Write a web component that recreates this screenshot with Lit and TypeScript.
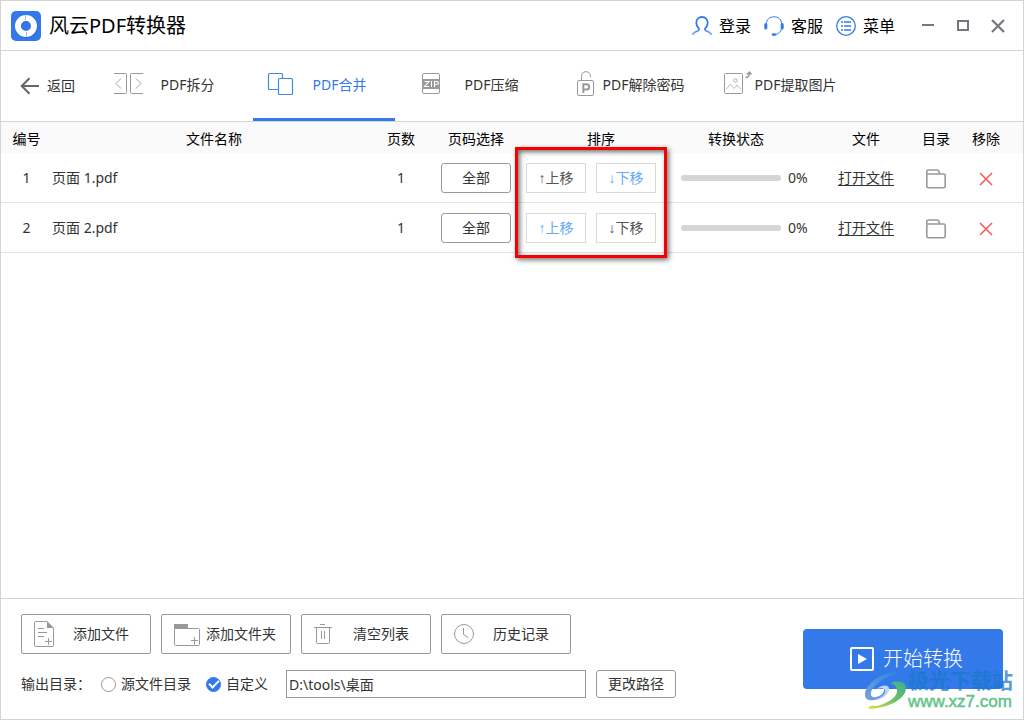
import { LitElement, html, css, svg } from "lit";
import { customElement, state } from "lit/decorators.js";
import { classMap } from "lit/directives/class-map.js";
import { styleMap } from "lit/directives/style-map.js";

interface Row {
  id: number;
  name: string;
  pages: number;
  progress: number;
}

const icons = {
  logo: html`<svg width="30" height="30" viewBox="0 0 30 30" aria-hidden="true">
    <rect width="30" height="30" rx="5" fill="#3379ea" />
    <circle cx="16" cy="16" r="8" fill="none" stroke="#2158b8" stroke-width="6" opacity=".45" />
    <circle cx="15" cy="15" r="8" fill="none" stroke="#fff" stroke-width="6" />
    <path d="M14.500 4v5M15.500 21v5" stroke="#9cbcf3" stroke-width="1" />
  </svg>`,
  user: html`<svg width="20" height="20" viewBox="0 0 20 20" fill="none" aria-hidden="true">
    <defs><linearGradient id="u" x1="0" y1="0" x2="0" y2="1"><stop offset=".6" stop-color="#3379ea" /><stop offset="1" stop-color="#8db6f5" /></linearGradient></defs>
    <path d="M.5 19c.6-2.700 3.200-3.200 5.500-4.200 1.300-.6 1.400-1.600.5-2.700C5.200 10.600 4.300 9 4.300 6.800 4.300 3.300 6.700 1 10 1s5.700 2.300 5.700 5.800c0 2.200-.9 3.800-2.200 5.300-.9 1.100-.8 2.100.5 2.700 2.300 1 4.900 1.500 5.500 4.200" stroke="url(#u)" stroke-width="1.800" />
  </svg>`,
  headset: html`<svg width="20" height="20" viewBox="0 0 20 20" fill="none" stroke="#3379ea" aria-hidden="true">
    <path d="M2.300 8C2.500 3.500 5.500.8 10 .8S17.500 3.500 17.700 8M17.400 13c-.8 3-2.700 4.900-5.600 5.400" stroke-width="1" />
    <rect x=".3" y="7" width="3" height="6.500" rx="1.500" fill="#3379ea" stroke="none" />
    <rect x="16.700" y="7" width="3" height="6.500" rx="1.500" fill="#3379ea" stroke="none" />
    <ellipse cx="10" cy="18.600" rx="2.400" ry="1.300" fill="#3379ea" stroke="none" />
  </svg>`,
  menu: html`<svg width="20" height="20" viewBox="0 0 20 20" fill="none" stroke="#3379ea" aria-hidden="true">
    <circle cx="10" cy="10" r="9.300" stroke-width="1.300" />
    <path d="M5 6h2M8 6h7M5 10h2M8 10h7M5 14h2M8 14h7" stroke-width="1.600" />
  </svg>`,
  back: html`<svg width="20" height="18" viewBox="0 0 20 18" fill="none" stroke="#666" stroke-width="2" aria-hidden="true">
    <path d="M19 9H2M9.500 1.200 1.700 9l7.800 7.800" />
  </svg>`,
  split: svg`<g stroke="#999"><path d="M0 3.500h11.500q1 0 1 1v18q0 1-1 1H0M29 3.500H17.500q-1 0-1 1v18q0 1 1 1H29" /><path d="M7 8.500 2 13.500l5 5M22 8.500l5 5-5 5" stroke-width=".9" /></g>`,
  merge: svg`<g stroke="#3f8ae8" stroke-width="1.200"><path d="M12 19.500H3.500q-1 0-1-1v-14q0-1 1-1h12q1 0 1 1V8" /><rect x="12.500" y="8.500" width="14" height="16" rx="1" /></g>`,
  zip: svg`<rect x="4.500" y="3.500" width="17" height="20" rx="1.500" stroke="#999" /><path d="M4 9h18v10H4z" fill="#999" /><path d="M6.500 11.500h4.500l-4.500 5H11M13.500 11v6M16.500 17v-5.500h2.500q1.500 0 1.500 1.400t-1.500 1.400h-2.500" stroke="#fff" stroke-width="1.100" />`,
  lock: svg`<rect x="7.500" y="10.500" width="16" height="15" rx="1.500" stroke="#999" /><path d="M11.500 10V6.500q0-4.800 4.500-4.800 4.500 0 4.500 4.800V7.500" stroke="#999" /><path d="M13.300 23V14.200h3q2.900 0 2.900 2.700t-2.900 2.700h-2.500" stroke="#999" stroke-width="2" />`,
  image: svg`<rect x="2.500" y="3.500" width="18" height="20" rx="1" stroke="#999" /><circle cx="13.500" cy="10.500" r="1.700" stroke="#aaa" /><path d="M4.500 19 8.500 14l3.500 4.500 3-3.500 4 4.500" stroke="#bbb" /><path d="M23.500 7.500q4 0 4-5M24.700 4.500l2.800-2.500 2 2.500" stroke="#999" stroke-width="1.500" />`,
  folder: html`<svg width="20" height="20" viewBox="0 0 20 20" fill="none" stroke="#999" stroke-width="1.600" aria-hidden="true">
    <path d="M.8 5V2.300Q.8 1 2 1h9q1.500 0 2 1.500l.6 2.200" /><rect x=".8" y="5" width="18.400" height="13.800" rx="1.500" />
  </svg>`,
  remove: html`<svg width="14" height="14" viewBox="0 0 14 14" stroke="#f4585d" stroke-width="1.500" aria-hidden="true">
    <path d="m1 1 12 12M13 1 1 13" />
  </svg>`,
  addFile: svg`<path d="M13 2.500H1.500q-1 0-1 1v23q0 1 1 1h17q1 0 1-1V9" stroke="#999" /><path d="M13 2v7h7z" fill="#999" /><path d="M4 9.500h6M4 13.500h9M4 17.500h6M14.500 19v7M11 22.500h7" stroke="#999" />`,
  addFolder: svg`<path d="M0 9.500V5h14v4.500z" fill="#999" /><path d="M.5 9.500h24q1 0 1 1v15q0 1-1 1h-23q-1 0-1-1zM20.500 18v7.500M17 21.500h7" stroke="#999" />`,
  trash: svg`<path d="M6 5.500h5M0 8.500h18M2.500 8.500v15q0 1 1 1h11q1 0 1-1v-15M7.500 12v8M10.500 12v8" stroke="#999" />`,
  clock: svg`<circle cx="10" cy="15" r="9.500" stroke="#999" /><path d="M9.500 9v6.500l5 3.500" stroke="#999" />`,
  play: html`<svg width="24" height="24" viewBox="0 0 24 24" fill="none" aria-hidden="true">
    <rect x="1" y="1" width="22" height="22" rx="1" stroke="#fff" stroke-width="2" /><path d="m8 7 9 5-9 5z" fill="#fff" />
  </svg>`,
};

@customElement("app-root")
export class AppRoot extends LitElement {
  @state() private tab = "merge";
  @state() private target = "custom";
  @state() private rows: Row[] = [
    { id: 1, name: "页面 1.pdf", pages: 1, progress: 0 },
    { id: 2, name: "页面 2.pdf", pages: 1, progress: 0 },
  ];

  private tabs = [
    { id: "split", label: "PDF拆分", icon: icons.split },
    { id: "merge", label: "PDF合并", icon: icons.merge },
    { id: "zip", label: "PDF压缩", icon: icons.zip },
    { id: "lock", label: "PDF解除密码", icon: icons.lock },
    { id: "image", label: "PDF提取图片", icon: icons.image },
  ];

  private actions = [
    { label: "添加文件", icon: icons.addFile },
    { label: "添加文件夹", icon: icons.addFolder },
    { label: "清空列表", icon: icons.trash },
    { label: "历史记录", icon: icons.clock },
  ];

  static styles = css`
    :host {
      display: block;
      font: 14px/20px "Noto Sans", "Noto Sans CJK SC", sans-serif;
      color: #333;
    }
    * { box-sizing: border-box; }
    button, input { font: inherit; color: inherit; margin: 0; }
    button { background: none; border: 0; padding: 0; cursor: pointer; white-space: nowrap; }
    svg { display: block; flex: none; }
    .window {
      display: flex;
      flex-direction: column;
      min-height: 100vh;
      border: 1px solid #d4d4d4;
      background: #fff;
      position: relative;
    }
    .titlebar {
      display: flex;
      align-items: center;
      height: 50px;
      padding: 0 8px 0 10px;
      border-bottom: 1px solid #d4d4d4;
      color: #000;
    }
    .title { font-size: 20px; line-height: 28px; font-weight: 400; margin: 0 auto 0 8px; }
    .links { display: flex; gap: 13px; font-size: 16px; line-height: 24px; margin-right: 15px; }
    .link { display: flex; align-items: center; gap: 7px; }
    .control { display: grid; place-items: center; width: 35px; height: 32px; }
    .toolbar { display: flex; height: 71px; border-bottom: 1px solid #d4d4d4; }
    .back { display: flex; align-items: center; gap: 7px; width: 100px; padding-left: 19px; }
    .tabs { display: flex; gap: 10px; }
    .tab {
      display: flex;
      align-items: center;
      gap: 2px;
      width: 142px;
      padding: 0 14px 0 13px;
      border-bottom: 3px solid transparent;
    }
    .tab.active { color: #3379ea; border-color: #3379ea; }
    .label { flex: 1; text-align: center; }
    .list { flex: 1; position: relative; }
    .table { width: 100%; border-spacing: 0; table-layout: fixed; }
    .table th { height: 31px; padding: 2px 0 0; font-weight: 400; color: #000; background: #fafafa; }
    .table td { height: 50px; padding: 1px 0 0; text-align: center; border-bottom: 1px solid #e4e4e4; }
    .c-no { width: 51px; }
    .c-pages { width: 50px; }
    .c-range { width: 100px; }
    .c-sort { width: 150px; }
    .c-state { width: 145px; }
    .c-file { width: 90px; }
    .c-dir { width: 50px; }
    .c-del { width: 62px; }
    .table .th-state { padding-right: 25px; }
    .table .del { padding-right: 12px; }
    .table .name { text-align: left; }
    .range { width: 70px; height: 30px; border: 1px solid #999; border-radius: 3px; }
    .sort { display: flex; gap: 10px; }
    .move { width: 60px; height: 30px; border: 1px solid #d9d9d9; color: #555; }
    .move.blue { color: #64aaf8; }
    .arrow { font-family: "Liberation Sans", sans-serif; }
    .state { display: flex; align-items: center; gap: 7px; padding-left: 5px; }
    .track { width: 100px; height: 6px; border-radius: 3px; background: #d5d5d5; overflow: hidden; }
    .fill { height: 100%; background: #3379ea; }
    .open { color: inherit; text-underline-offset: 2px; }
    .icon-button { display: inline-block; vertical-align: middle; }
    .highlight {
      position: absolute;
      top: 25px;
      right: 356px;
      width: 152px;
      height: 111px;
      border: 3px solid #f90000;
      box-shadow: 2px 2px 5px rgba(0, 0, 0, 0.55), inset 2px 2px 5px rgba(0, 0, 0, 0.55);
      pointer-events: none;
    }
    .footer {
      display: flex;
      align-items: center;
      justify-content: space-between;
      padding: 15px 20px 21px;
      border-top: 1px solid #d4d4d4;
    }
    .left { display: grid; gap: 16px; }
    .actions { display: flex; gap: 10px; }
    .action {
      display: flex;
      align-items: center;
      gap: 6px;
      width: 130px;
      height: 40px;
      padding: 0 14px 0 12px;
      border: 1px solid #999;
      border-radius: 2px;
    }
    .output { display: flex; align-items: center; gap: 10px; white-space: nowrap; }
    .choices { display: flex; gap: 15px; margin-right: 8px; }
    .choice { display: flex; align-items: center; gap: 5px; }
    .radio {
      appearance: none;
      display: grid;
      place-items: center;
      width: 15px;
      height: 15px;
      border: 1px solid #999;
      border-radius: 50%;
    }
    .radio:checked { background: #3379ea; border-color: #3379ea; }
    .radio:checked::after {
      content: "";
      width: 8px;
      height: 4px;
      border: solid #fff;
      border-width: 0 0 2px 2px;
      transform: translateY(-1px) rotate(-45deg);
    }
    .path { width: 300px; height: 28px; padding: 0 2px; border: 1px solid #999; background: #fff; }
    .change { width: 80px; height: 28px; border: 1px solid #999; border-radius: 3px; }
    .start {
      display: flex;
      align-items: center;
      justify-content: center;
      gap: 9px;
      width: 200px;
      height: 60px;
      padding-left: 7px;
      margin-top: 6px;
      border-radius: 4px;
      background: #3379ea;
      color: #fff;
      font-size: 20px;
      line-height: 28px;
      font-weight: 300;
    }
    .watermark {
      position: absolute;
      right: 10px;
      bottom: 7px;
      display: flex;
      align-items: center;
      gap: 2px;
      pointer-events: none;
      font-weight: 700;
    }
    .site { color: #1878c8; font-size: 21px; line-height: 24px; opacity: 0.72; }
    .url { color: #62c48c; font: 17px/20px "Liberation Sans", sans-serif; -webkit-text-stroke: 0.5px #62c48c; }
  `;

  private renderRow(row: Row, index: number) {
    return html`<tr>
      <td>${row.id}</td>
      <td class="name">${row.name}</td>
      <td>${row.pages}</td>
      <td><button class="range">全部</button></td>
      <td>
        <div class="sort">
          <button class=${classMap({ move: true, blue: index > 0 })} @click=${() => this.move(index, -1)}><span class="arrow">↑</span>上移</button>
          <button class=${classMap({ move: true, blue: index < this.rows.length - 1 })} @click=${() => this.move(index, 1)}><span class="arrow">↓</span>下移</button>
        </div>
      </td>
      <td>
        <div class="state">
          <div class="track" role="progressbar" aria-label="转换状态" aria-valuenow=${row.progress}>
            <div class="fill" style=${styleMap({ width: `${row.progress}%` })}></div>
          </div>
          <span>${row.progress}%</span>
        </div>
      </td>
      <td><a class="open" href="#">打开文件</a></td>
      <td><button class="icon-button" aria-label="目录">${icons.folder}</button></td>
      <td class="del"><button class="icon-button" aria-label="移除" @click=${() => this.remove(row.id)}>${icons.remove}</button></td>
    </tr>`;
  }

  private move(index: number, step: number) {
    const other = index + step;
    if (other < 0 || other >= this.rows.length) return;
    const rows = [...this.rows];
    [rows[index], rows[other]] = [rows[other], rows[index]];
    this.rows = rows;
  }

  private remove(id: number) {
    this.rows = this.rows.filter((r) => r.id !== id);
  }

  render() {
    return html`
      <div class="window">
        <header class="titlebar">
          ${icons.logo}
          <h1 class="title">风云PDF转换器</h1>
          <div class="links">
            <button class="link">${icons.user}登录</button>
            <button class="link">${icons.headset}客服</button>
            <button class="link">${icons.menu}菜单</button>
          </div>
          <button class="control" aria-label="最小化">
            <svg width="14" height="14" viewBox="0 0 14 14"><path d="M1 6h12" stroke="#77757f" stroke-width="2" /></svg>
          </button>
          <button class="control" aria-label="最大化">
            <svg width="14" height="14" viewBox="0 0 14 14"><rect x="2" y="2" width="10" height="9" fill="none" stroke="#77757f" stroke-width="2" /></svg>
          </button>
          <button class="control" aria-label="关闭">
            <svg width="14" height="14" viewBox="0 0 14 14"><path d="m1 1 12 12M13 1 1 13" stroke="#77757f" stroke-width="2.200" /></svg>
          </button>
        </header>
        <nav class="toolbar">
          <button class="back">${icons.back}返回</button>
          <div class="tabs">
            ${this.tabs.map(
              (t) => html`<button class=${classMap({ tab: true, active: this.tab === t.id })} @click=${() => (this.tab = t.id)}>
                <svg width="30" height="30" viewBox="0 0 30 30" fill="none" aria-hidden="true">${t.icon}</svg>
                <span class="label">${t.label}</span>
              </button>`,
            )}
          </div>
        </nav>
        <main class="list">
          <table class="table">
            <colgroup>
              <col class="c-no" /><col /><col class="c-pages" /><col class="c-range" /><col class="c-sort" />
              <col class="c-state" /><col class="c-file" /><col class="c-dir" /><col class="c-del" />
            </colgroup>
            <thead>
              <tr>
                <th>编号</th>
                <th>文件名称</th>
                <th>页数</th>
                <th>页码选择</th>
                <th>排序</th>
                <th class="th-state">转换状态</th>
                <th>文件</th>
                <th>目录</th>
                <th class="del">移除</th>
              </tr>
            </thead>
            <tbody>
              ${this.rows.map((r, i) => this.renderRow(r, i))}
            </tbody>
          </table>
          <div class="highlight"></div>
        </main>
        <footer class="footer">
          <div class="left">
            <div class="actions">
              ${this.actions.map(
                (a) => html`<button class="action">
                  <svg width="26" height="30" viewBox="0 0 26 30" fill="none" aria-hidden="true">${a.icon}</svg>
                  <span class="label">${a.label}</span>
                </button>`,
              )}
            </div>
            <div class="output">
              <span>输出目录：</span>
              <div class="choices">
                <label class="choice"><input class="radio" type="radio" name="target" .checked=${this.target === "source"} @change=${() => (this.target = "source")} />源文件目录</label>
                <label class="choice"><input class="radio" type="radio" name="target" .checked=${this.target === "custom"} @change=${() => (this.target = "custom")} />自定义</label>
              </div>
              <input class="path" type="text" aria-label="输出目录" .value=${"D:\\tools\\桌面"} />
              <button class="change">更改路径</button>
            </div>
          </div>
          <button class="start">${icons.play}开始转换</button>
        </footer>
        <div class="watermark">
          <svg width="41" height="40" viewBox="0 0 41 40" aria-hidden="true">
            <defs>
              <linearGradient id="w1" x1="0" y1="1" x2="1" y2="0"><stop offset="0" stop-color="#7f9fe0" /><stop offset="1" stop-color="#1a86dc" /></linearGradient>
              <linearGradient id="w2" x1="0" y1="1" x2="1" y2="0"><stop offset="0" stop-color="#e8dc4a" /><stop offset=".5" stop-color="#6cc36c" /><stop offset="1" stop-color="#3dae8c" /></linearGradient>
            </defs>
            <path d="M39 1C22 0 3 10 0 23c-1 6 3 8 9 7 8-1 14-6 13-11-1-3-5-3-8-1 3-1 5 0 5 2 0 4-6 8-11 7-7-3 3-19 31-26z" fill="url(#w1)" />
            <path d="M26 13c8-3 15-1 15 5 0 10-15 20-38 21l2-3c6-1 4 1 10-1 11-3 18-10 17-15 0-3-2-5-6-7z" fill="url(#w2)" />
            <path d="M12 19c4-4 12-5 12 0 0 5-6 10-13 11 7-3 10-7 9-10-1-2-5-2-8-1z" fill="#b9d6f2" />
          </svg>
          <div>
            <div class="site">极光下载站</div>
            <div class="url">www.xz7.com</div>
          </div>
        </div>
      </div>
    `;
  }
}
